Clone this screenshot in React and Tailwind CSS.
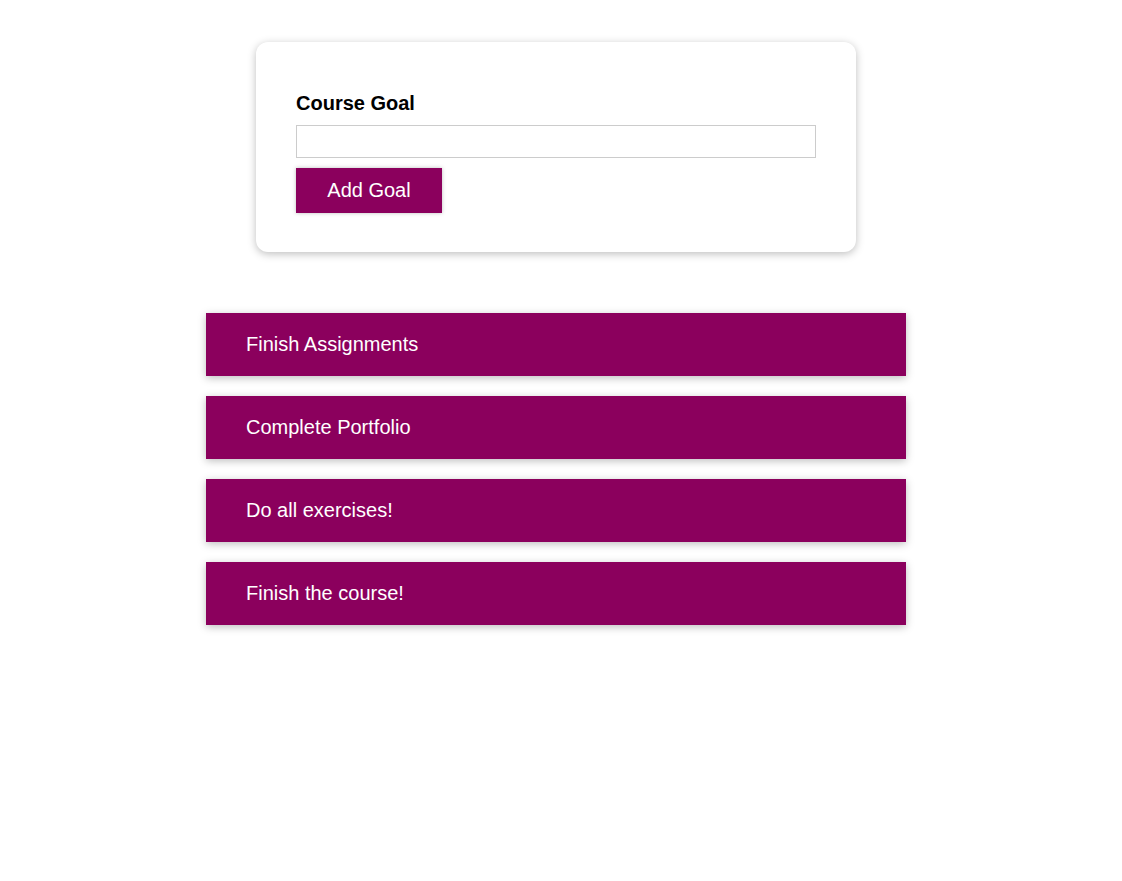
export default function App() {
  const goals = ["Finish Assignments", "Complete Portfolio", "Do all exercises!", "Finish the course!"];
  return (
    <div className="min-h-[881px] bg-white flex flex-col items-center pr-[10px]" style={{ fontFamily: '"Liberation Sans", Arial, sans-serif' }}>
      <form className="mt-[42px] w-[600px] rounded-[12px] bg-white px-[40px] pt-[50px] pb-[39px] shadow-[0_2px_8px_rgba(0,0,0,0.26)]" onSubmit={(e) => e.preventDefault()}>
        <label className="block text-[20px] font-bold leading-[23px] text-black">Course Goal</label>
        <input type="text" className="mt-[10px] block w-[520px] h-[33px] border border-[#ccc] px-1 text-[19px] outline-none" />
        <button type="submit" className="mt-[10px] block w-[146px] h-[45px] bg-[#8b005d] text-white text-[20px] leading-[23px] shadow-[0_0_4px_rgba(0,0,0,0.26)]">Add Goal</button>
      </form>
      <ul className="mt-[61px] w-[700px] flex flex-col gap-[20px]">
        {goals.map((g) => (
          <li key={g} className="h-[63px] flex items-center pl-[40px] pb-[2px] bg-[#8b005d] text-white text-[20px] shadow-[0_2px_8px_rgba(0,0,0,0.26)]">{g}</li>
        ))}
      </ul>
    </div>
  );
}
